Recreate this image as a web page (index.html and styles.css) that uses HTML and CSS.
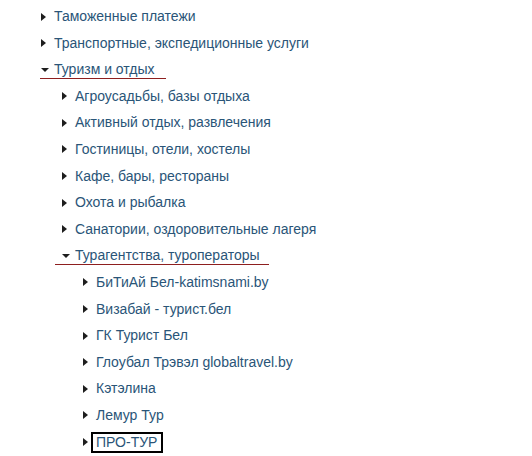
FILE: index.html
```html
<!DOCTYPE html>
<html lang="ru">
<head>
<meta charset="utf-8">
<link rel="stylesheet" href="styles.css">
</head>
<body>
<ul class="tree lvl1">
  <li><span class="item"><span class="tri right"></span><a href="#">Таможенные платежи</a></span></li>
  <li><span class="item"><span class="tri right"></span><a href="#">Транспортные, экспедиционные услуги</a></span></li>
  <li class="open"><span class="item"><span class="tri down"></span><a href="#">Туризм и отдых</a></span>
    <ul class="tree lvl2">
      <li><span class="item"><span class="tri right"></span><a href="#">Агроусадьбы, базы отдыха</a></span></li>
      <li><span class="item"><span class="tri right"></span><a href="#">Активный отдых, развлечения</a></span></li>
      <li><span class="item"><span class="tri right"></span><a href="#">Гостиницы, отели, хостелы</a></span></li>
      <li><span class="item"><span class="tri right"></span><a href="#">Кафе, бары, рестораны</a></span></li>
      <li><span class="item"><span class="tri right"></span><a href="#">Охота и рыбалка</a></span></li>
      <li><span class="item"><span class="tri right"></span><a href="#">Санатории, оздоровительные лагеря</a></span></li>
      <li class="open"><span class="item"><span class="tri down"></span><a href="#">Турагентства, туроператоры</a></span>
        <ul class="tree lvl3">
          <li><span class="item"><span class="tri right"></span><a href="#">БиТиАй Бел-katimsnami.by</a></span></li>
          <li><span class="item"><span class="tri right"></span><a href="#">Визабай - турист.бел</a></span></li>
          <li><span class="item"><span class="tri right"></span><a href="#">ГК Турист Бел</a></span></li>
          <li><span class="item"><span class="tri right"></span><a href="#">Глоубал Трэвэл globaltravel.by</a></span></li>
          <li><span class="item"><span class="tri right"></span><a href="#">Кэтэлина</a></span></li>
          <li><span class="item"><span class="tri right"></span><a href="#">Лемур Тур</a></span></li>
          <li><span class="item"><span class="tri right"></span><a href="#" class="focused">ПРО-ТУР</a></span></li>
        </ul>
      </li>
    </ul>
  </li>
</ul>
</body>
</html>
```
FILE: styles.css
```css
html, body {
  margin: 0;
  padding: 0;
  background: #fff;
}
body {
  font-family: "Liberation Sans", Arial, sans-serif;
  font-size: 14px;
  color: #2a5578;
}
.tree {
  list-style: none;
  margin: 0;
  padding: 0;
}
.lvl1 {
  padding: 8px 0 0 40px;
}
.lvl2, .lvl3 {
  padding-left: 21px;
}
.tree li {
  margin: 0;
  display: block;
}
.item {
  display: flex;
  width: fit-content;
  align-items: center;
  height: 17px;
  line-height: 17px;
  padding-right: 11px;
  border-bottom: 1px solid transparent;
  margin-bottom: 8.6px;
}
.open > .item {
  border-bottom-color: #8e1f1f;
}
.lvl2 > .open > .item {
  margin-left: -6px;
  padding-left: 6px;
  padding-right: 9px;
}
.tri {
  display: block;
  flex: none;
  width: 0;
  height: 0;
  margin-left: 1px;
  margin-right: 8px;
}
.tri.right {
  border-top: 4px solid transparent;
  border-bottom: 4px solid transparent;
  border-left: 5px solid #1e1e1e;
}
.tri.down {
  border-left: 4px solid transparent;
  border-right: 4px solid transparent;
  border-top: 4px solid #1e1e1e;
  margin-right: 5px;
}
.tree a {
  color: #2a5578;
  text-decoration: none;
  white-space: nowrap;
}
.tree a.focused {
  outline: 2px solid #000;
  outline-offset: 0;
  padding: 0 4px 0 3px;
  margin-left: -3px;
}
```
